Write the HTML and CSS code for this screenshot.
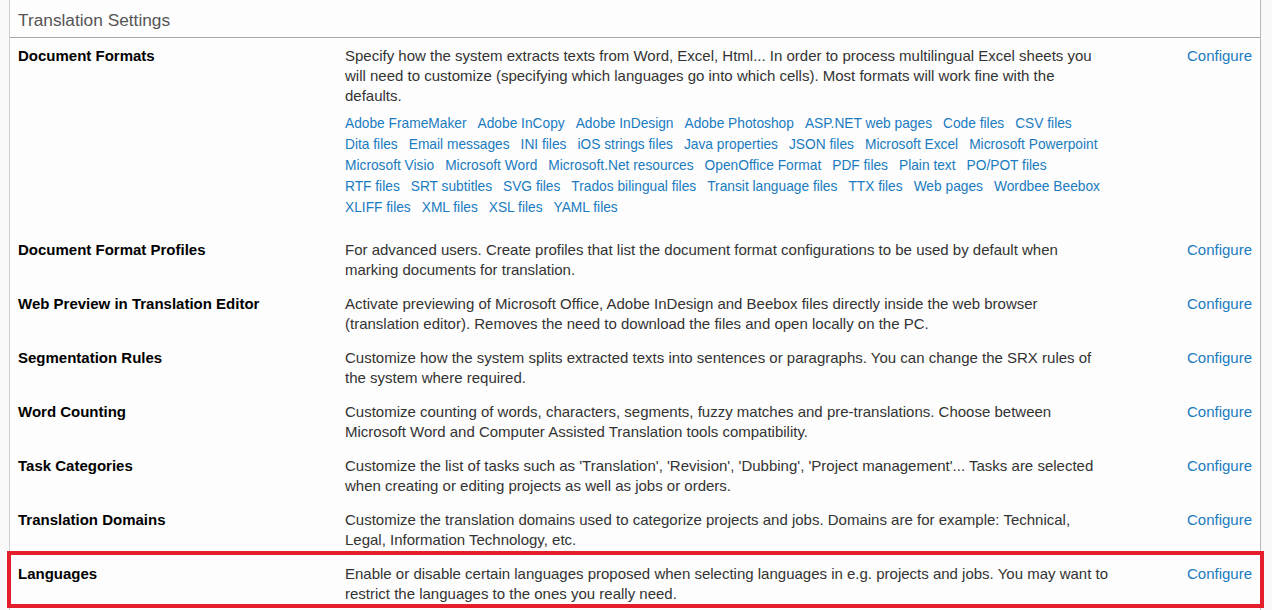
FILE: index.html
```html
<!DOCTYPE html>
<html lang="en">
<head>
<meta charset="utf-8">
<title>Translation Settings</title>
<link rel="stylesheet" href="styles.css">
</head>
<body>
<div class="panel">
  <div class="panel-header">Translation Settings</div>
  <div class="rows">
    <div class="row">
      <div class="name">Document Formats</div>
      <div class="desc">
        <p>Specify how the system extracts texts from Word, Excel, Html... In order to process multilingual Excel sheets you will need to customize (specifying which languages go into which cells). Most formats will work fine with the defaults.</p>
        <div class="formats">
          <a href="#">Adobe FrameMaker</a><a href="#">Adobe InCopy</a><a href="#">Adobe InDesign</a><a href="#">Adobe Photoshop</a><a href="#">ASP.NET web pages</a><a href="#">Code files</a><a href="#">CSV files</a><a href="#">Dita files</a><a href="#">Email messages</a><a href="#">INI files</a><a href="#">iOS strings files</a><a href="#">Java properties</a><a href="#">JSON files</a><a href="#">Microsoft Excel</a><a href="#">Microsoft Powerpoint</a><a href="#">Microsoft Visio</a><a href="#">Microsoft Word</a><a href="#">Microsoft.Net resources</a><a href="#">OpenOffice Format</a><a href="#">PDF files</a><a href="#">Plain text</a><a href="#">PO/POT files</a><a href="#">RTF files</a><a href="#">SRT subtitles</a><a href="#">SVG files</a><a href="#">Trados bilingual files</a><a href="#">Transit language files</a><a href="#">TTX files</a><a href="#">Web pages</a><a href="#">Wordbee Beebox</a><a href="#">XLIFF files</a><a href="#">XML files</a><a href="#">XSL files</a><a href="#">YAML files</a>
        </div>
      </div>
      <div class="action"><a href="#">Configure</a></div>
    </div>
    <div class="row">
      <div class="name">Document Format Profiles</div>
      <div class="desc"><p>For advanced users. Create profiles that list the document format configurations to be used by default when marking documents for translation.</p></div>
      <div class="action"><a href="#">Configure</a></div>
    </div>
    <div class="row">
      <div class="name">Web Preview in Translation Editor</div>
      <div class="desc"><p>Activate previewing of Microsoft Office, Adobe InDesign and Beebox files directly inside the web browser (translation editor). Removes the need to download the files and open locally on the PC.</p></div>
      <div class="action"><a href="#">Configure</a></div>
    </div>
    <div class="row">
      <div class="name">Segmentation Rules</div>
      <div class="desc"><p>Customize how the system splits extracted texts into sentences or paragraphs. You can change the SRX rules of the system where required.</p></div>
      <div class="action"><a href="#">Configure</a></div>
    </div>
    <div class="row">
      <div class="name">Word Counting</div>
      <div class="desc"><p>Customize counting of words, characters, segments, fuzzy matches and pre-translations. Choose between Microsoft Word and Computer Assisted Translation tools compatibility.</p></div>
      <div class="action"><a href="#">Configure</a></div>
    </div>
    <div class="row">
      <div class="name">Task Categories</div>
      <div class="desc"><p>Customize the list of tasks such as 'Translation', 'Revision', 'Dubbing', 'Project management'... Tasks are selected when creating or editing projects as well as jobs or orders.</p></div>
      <div class="action"><a href="#">Configure</a></div>
    </div>
    <div class="row">
      <div class="name">Translation Domains</div>
      <div class="desc"><p>Customize the translation domains used to categorize projects and jobs. Domains are for example: Technical, Legal, Information Technology, etc.</p></div>
      <div class="action"><a href="#">Configure</a></div>
    </div>
    <div class="row row-highlight">
      <div class="name">Languages</div>
      <div class="desc"><p>Enable or disable certain languages proposed when selecting languages in e.g. projects and jobs. You may want to restrict the languages to the ones you really need.</p></div>
      <div class="action"><a href="#">Configure</a></div>
    </div>
  </div>
</div>
</body>
</html>
```

FILE: styles.css
```css
html, body {
  margin: 0;
  padding: 0;
}

body {
  background: #f9f9f9;
  font-family: "Liberation Sans", Arial, sans-serif;
  font-size: 15px;
  color: #333;
  overflow: hidden;
}

.panel {
  margin-left: 9px;
  width: 1250px;
  min-height: 610px;
  background: #fdfdfd;
  border-left: 1px solid #cfcfcf;
  border-right: 1px solid #b9b9b9;
}

.panel-header {
  height: 38px;
  box-sizing: border-box;
  padding: 10px 8px 0;
  font-size: 17.3px;
  line-height: 20px;
  color: #555;
  border-bottom: 1px solid #a9a9a9;
}

.row {
  display: grid;
  grid-template-columns: 327px 765px 1fr;
  padding: 7px 8px;
  line-height: 20px;
}

.row:first-child {
  padding-top: 8px;
  padding-bottom: 15px;
}

.name {
  font-weight: bold;
  color: #000;
}

.desc p {
  margin: 0;
  color: #333;
  font-size: 15px;
}

.formats {
  display: flex;
  flex-wrap: wrap;
  column-gap: 11px;
  margin-top: 7px;
  line-height: 21px;
  font-size: 13.75px;
}

a {
  color: #1a7bc0;
  text-decoration: none;
}

.action {
  text-align: right;
}

.row-highlight {
  position: relative;
}

.row-highlight::after {
  content: "";
  position: absolute;
  top: -6px;
  bottom: 3px;
  left: -3px;
  right: -4px;
  border: 4px solid #e41f2b;
  pointer-events: none;
}
```
